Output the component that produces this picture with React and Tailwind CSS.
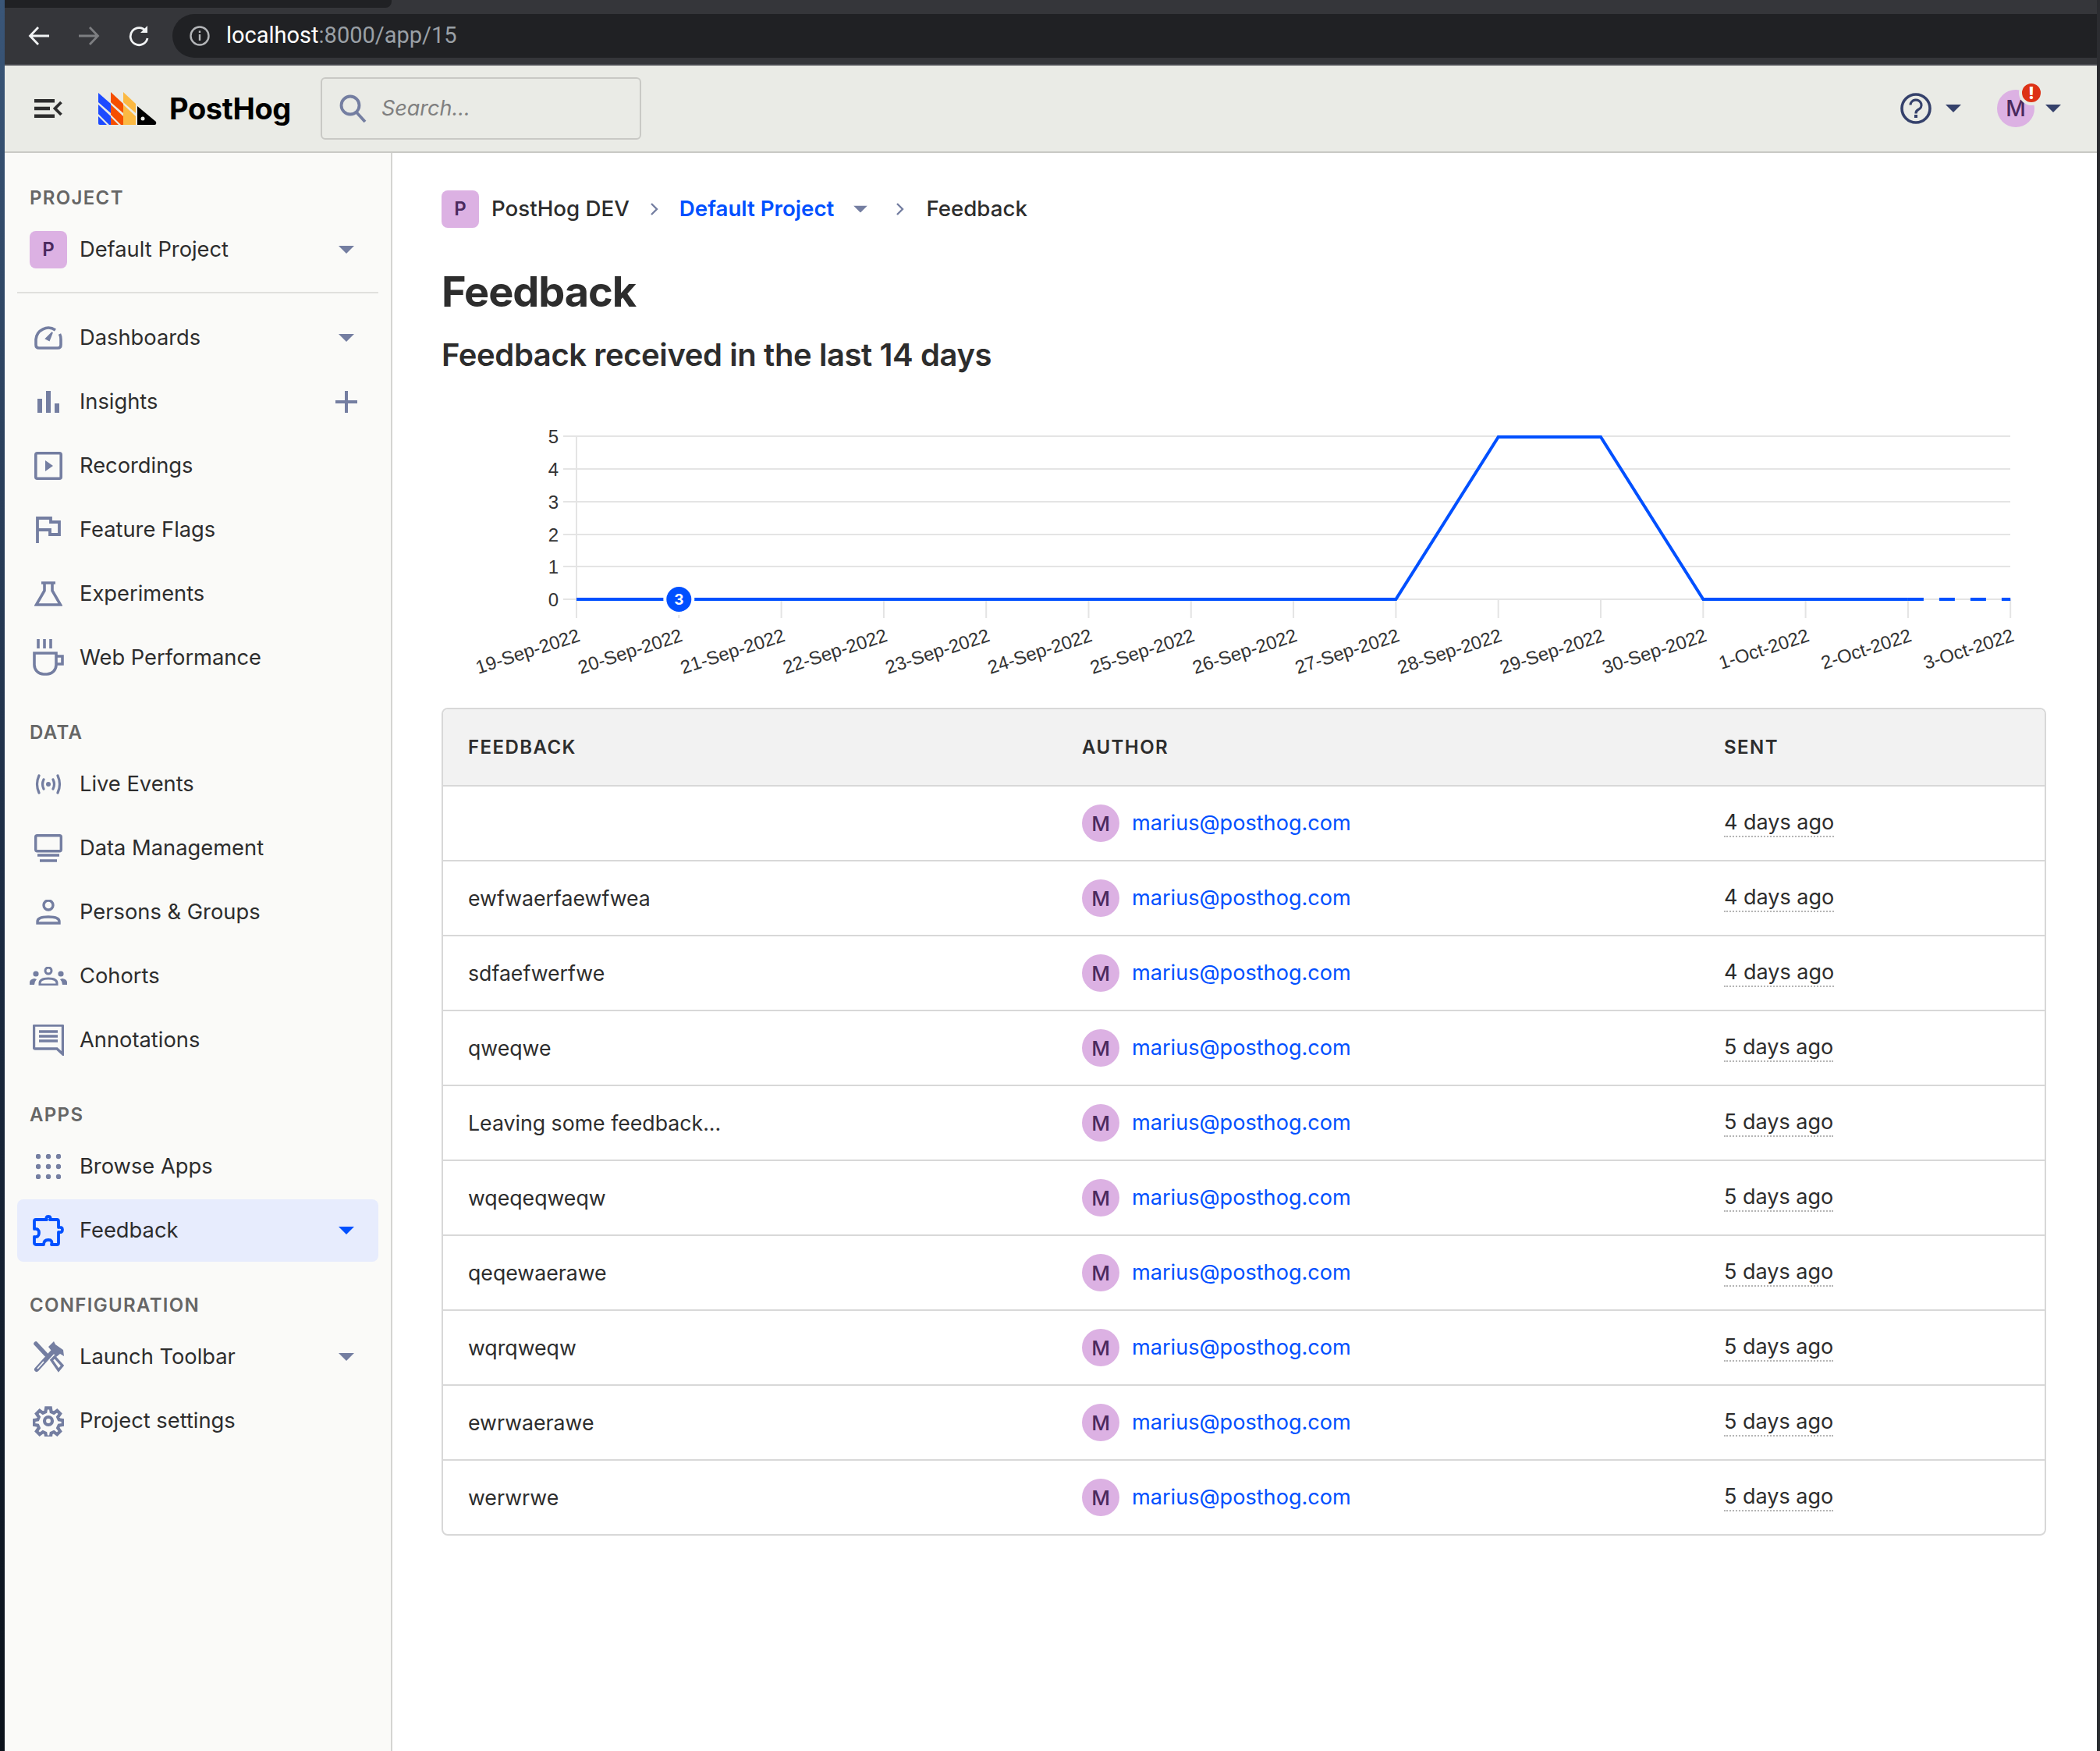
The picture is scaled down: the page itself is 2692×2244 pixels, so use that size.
const slate = "#747ea1";
const blue = "#0050ff";

function Caret({ color = slate, className = "" }) {
  return (
    <svg width="20" height="10" viewBox="0 0 20 10" className={className}>
      <path d="M0 0h20L10 10z" fill={color} />
    </svg>
  );
}

const icons = {
  dashboards: (
    <svg width="36" height="30" viewBox="0 0 36 30" fill="none" stroke={slate} strokeWidth="3.6">
      <path d="M27 5A16 16 0 0 0 2 17v7q0 4 4 4h24q4 0 4-4v-7q0-4-1.5-7" />
      <path d="M15 16l8-8-4 10z" fill={slate} strokeWidth="2" />
    </svg>
  ),
  insights: (
    <svg width="28" height="28" viewBox="0 0 28 28" fill={slate}>
      <rect x="0" y="10" width="6" height="18" />
      <rect x="11" y="0" width="6" height="28" />
      <rect x="22" y="16" width="6" height="12" />
    </svg>
  ),
  recordings: (
    <svg width="36" height="36" viewBox="0 0 36 36" fill="none">
      <rect x="1.8" y="1.8" width="32.4" height="32.4" rx="2" stroke={slate} strokeWidth="3.6" />
      <path d="M14 11l10 7-10 7z" fill={slate} />
    </svg>
  ),
  flags: (
    <svg width="32" height="34" viewBox="0 0 32 34" fill="none" stroke={slate} strokeWidth="3.8">
      <path d="M2 34V2h17v5h11v16H18v-6H2" />
    </svg>
  ),
  experiments: (
    <svg width="36" height="32" viewBox="0 0 36 32" fill="none" stroke={slate} strokeWidth="3.6">
      <path d="M9 2h18M13 2v10L2.500 30h31L23 12V2" />
    </svg>
  ),
  web: (
    <svg width="40" height="48" viewBox="0 0 40 48" fill="none" stroke={slate} strokeWidth="3.6">
      <path d="M7 0v12M15 0v12M23 0v12" />
      <path d="M2 18h28v15a12 12 0 0 1-12 12h-4A12 12 0 0 1 2 33z" />
      <path d="M30 22h8v10h-8" />
    </svg>
  ),
  live: (
    <svg width="38" height="26" viewBox="0 0 38 26" fill="none" stroke={slate} strokeWidth="3.2" strokeLinecap="round">
      <path d="M7 2q-5 11 0 22M31 2q5 11 0 22M13 7q-3 6 0 12M25 7q3 6 0 12" />
      <circle cx="19" cy="13" r="3" fill={slate} stroke="none" />
    </svg>
  ),
  data: (
    <svg width="36" height="36" viewBox="0 0 36 36" fill="none" stroke={slate} strokeWidth="3.4">
      <rect x="1.7" y="1.7" width="32.600" height="20" rx="2" />
      <path d="M4 27h28M7 34h22" />
    </svg>
  ),
  persons: (
    <svg width="32" height="32" viewBox="0 0 32 32" fill="none" stroke={slate} strokeWidth="3.4">
      <circle cx="16" cy="7" r="6" />
      <path d="M2 30v-2q0-6 14-6t14 6v2z" />
    </svg>
  ),
  cohorts: (
    <svg width="48" height="24" viewBox="0 0 48 24" fill="none">
      <circle cx="24" cy="5" r="4" stroke={slate} strokeWidth="3" />
      <circle cx="8" cy="9" r="3.600" fill={slate} />
      <circle cx="40" cy="9" r="3.600" fill={slate} />
      <path d="M13 23v-2q0-6 11-6t11 6v2z" stroke={slate} strokeWidth="3" />
      <path d="M0 23v-3q0-4 6-5l3 1q-3 3-3 7zM48 23v-3q0-4-6-5l-3 1q3 3 3 7z" fill={slate} />
    </svg>
  ),
  annotations: (
    <svg width="40" height="40" viewBox="0 0 40 40" fill="none" stroke={slate}>
      <path d="M38.500 38L31 31H3q-1.500 0-1.500-1.500v-27Q1.500 1 3 1h34q1.500 0 1.500 1.500z" strokeWidth="3.400" />
      <path d="M8 9h24M8 15h24M8 21h24" strokeWidth="3.400" />
    </svg>
  ),
  browse: (
    <svg width="32" height="32" viewBox="0 0 32 32" fill={slate}>
      {[3, 16, 29].map((y) =>
        [3, 16, 29].map((x) => <circle key={`${x}-${y}`} cx={x} cy={y} r="3.200" />)
      )}
    </svg>
  ),
  feedback: (
    <svg width="40" height="40" viewBox="0 0 40 40" fill="none" stroke={blue} strokeWidth="3.800" strokeLinejoin="round">
      <path d="M14 6h4q-2-4 2-4t2 4h9q2 0 2 2v8q5-1 5 3t-5 3v14q0 2-2 2H24q2-6-4-6t-6 6H4q-2 0-2-2v-8q6 1 6-5t-6-5V8q0-2 2-2z" />
    </svg>
  ),
  toolbar: (
    <svg width="40" height="42" viewBox="0 0 40 42" fill="none" stroke={slate}>
      <path d="M4 4l13 14" strokeWidth="5.500" strokeLinecap="round" />
      <path d="M24 25l4-4 10 11-5 6z" strokeWidth="3.400" />
      <path d="M5 37l20-22" stroke={slate} strokeWidth="6" strokeLinecap="round" />
      <path d="M6 36l8-9" stroke="#fafaf8" strokeWidth="1.600" />
      <path d="M20 8l7-7 2 4 10 7 1 8-5-3-5 4z" fill={slate} strokeWidth="0" />
    </svg>
  ),
  settings: (
    <svg width="40" height="40" viewBox="0 0 24 24" fill="none" stroke={slate} strokeWidth="2.500">
      <circle cx="12" cy="12" r="3" />
      <path d="M10.300 2h3.400l.5 3 2 .9 2.500-1.800 2.400 2.400-1.800 2.500.9 2 3 .5v3.400l-3 .5-.9 2 1.800 2.500-2.400 2.400-2.500-1.800-2 .9-.5 3h-3.400l-.5-3-2-.9-2.500 1.800-2.400-2.400 1.800-2.500-.9-2-3-.5v-3.400l3-.5.9-2-1.800-2.500 2.400-2.400 2.500 1.800 2-.9z" />
    </svg>
  ),
};

function NavItem({ icon, label, right, active }) {
  return (
    <div
      className={`mx-4 mb-0.5 flex h-20 items-center rounded-lg pl-2 pr-[31px] ${active ? "bg-[#e7ecfd]" : ""}`}
    >
      <div className="flex w-[64px] shrink-0 justify-center">{icons[icon]}</div>
      <span className="ml-2 flex-1 text-[27.3px] text-[#2d2d2d]">{label}</span>
      {right}
    </div>
  );
}

function SectionLabel({ children, className = "" }) {
  return (
    <div className={`pl-[32px] text-[24px] font-semibold leading-none tracking-[0.055em] text-[#666] ${className}`}>
      {children}
    </div>
  );
}

function ProjectBadge() {
  return (
    <div className="flex h-12 w-12 shrink-0 items-center justify-center rounded-lg bg-[#dcb1e3] text-[24px] font-semibold text-[#4b2a5e]">
      P
    </div>
  );
}

function Sidebar() {
  return (
    <aside className="flex w-[497px] shrink-0 flex-col border-r-2 border-[#d5d5d2] bg-[#fafaf8] pt-[46px]">
      <SectionLabel>PROJECT</SectionLabel>
      <div className="mt-[30px] flex h-12 items-center pl-[32px] pr-[47px]">
        <ProjectBadge />
        <span className="ml-4 flex-1 text-[27.3px] text-[#2d2d2d]">Default Project</span>
        <Caret />
      </div>
      <div className="mx-4 mt-[30px] h-0.5 bg-[#e0e0dd]" />
      <div className="mt-[17px]">
        <NavItem icon="dashboards" label="Dashboards" right={<Caret />} />
        <NavItem
          icon="insights"
          label="Insights"
          right={
            <svg width="28" height="28" viewBox="0 0 28 28" fill={slate} className="-mr-1">
              <rect x="12" width="4" height="28" />
              <rect y="12" width="28" height="4" />
            </svg>
          }
        />
        <NavItem icon="recordings" label="Recordings" />
        <NavItem icon="flags" label="Feature Flags" />
        <NavItem icon="experiments" label="Experiments" />
        <NavItem icon="web" label="Web Performance" />
      </div>
      <SectionLabel className="mt-[42px]">DATA</SectionLabel>
      <div className="mt-[14px]">
        <NavItem icon="live" label="Live Events" />
        <NavItem icon="data" label="Data Management" />
        <NavItem icon="persons" label="Persons & Groups" />
        <NavItem icon="cohorts" label="Cohorts" />
        <NavItem icon="annotations" label="Annotations" />
      </div>
      <SectionLabel className="mt-[42px]">APPS</SectionLabel>
      <div className="mt-[14px]">
        <NavItem icon="browse" label="Browse Apps" />
        <NavItem icon="feedback" label="Feedback" active right={<Caret color={blue} />} />
      </div>
      <SectionLabel className="mt-[42px]">CONFIGURATION</SectionLabel>
      <div className="mt-[14px]">
        <NavItem icon="toolbar" label="Launch Toolbar" right={<Caret />} />
        <NavItem icon="settings" label="Project settings" />
      </div>
    </aside>
  );
}

const dates = [
  "19-Sep-2022", "20-Sep-2022", "21-Sep-2022", "22-Sep-2022", "23-Sep-2022",
  "24-Sep-2022", "25-Sep-2022", "26-Sep-2022", "27-Sep-2022", "28-Sep-2022",
  "29-Sep-2022", "30-Sep-2022", "1-Oct-2022", "2-Oct-2022", "3-Oct-2022",
];

function Chart() {
  const x = (i) => 173 + i * 131.3;
  const ys = [268, 226, 185, 143, 101, 59];
  return (
    <svg width="2057" height="390" viewBox="0 0 2057 390" className="block">
      {ys.map((y, i) => (
        <g key={i}>
          <line x1="156" x2="2011" y1={y} y2={y} stroke="#e4e4e4" strokeWidth="2" />
          <text x="150" y={y + 9} textAnchor="end" fontSize="24" fill="#333" fontFamily="Liberation Sans">
            {i}
          </text>
        </g>
      ))}
      {dates.map((d, i) => (
        <g key={d}>
          <line x1={x(i)} x2={x(i)} y1={i === 0 ? 59 : 268} y2="292" stroke="#e4e4e4" strokeWidth="2" />
          <text
            textAnchor="end"
            fontSize="24"
            fill="#333"
            fontFamily="Liberation Sans"
            transform={`translate(${x(i) + 6} 321) rotate(-18)`}
          >
            {d}
          </text>
        </g>
      ))}
      <polyline
        points={`${x(0)},268 ${x(8)},268 ${x(9)},60 ${x(10)},60 ${x(11)},268 ${x(13)},268`}
        fill="none"
        stroke={blue}
        strokeWidth="4"
      />
      <line x1={x(13)} x2={x(14)} y1="268" y2="268" stroke={blue} strokeWidth="4" strokeDasharray="20 20" />
      <circle cx={x(1)} cy="268" r="18" fill={blue} stroke="#fff" strokeWidth="4" />
      <text x={x(1)} y="275" textAnchor="middle" fontSize="19" fontWeight="700" fill="#fff" fontFamily="Inter">
        3
      </text>
    </svg>
  );
}

const rows = [
  ["", "4 days ago"],
  ["ewfwaerfaewfwea", "4 days ago"],
  ["sdfaefwerfwe", "4 days ago"],
  ["qweqwe", "5 days ago"],
  ["Leaving some feedback...", "5 days ago"],
  ["wqeqeqweqw", "5 days ago"],
  ["qeqewaerawe", "5 days ago"],
  ["wqrqweqw", "5 days ago"],
  ["ewrwaerawe", "5 days ago"],
  ["werwrwe", "5 days ago"],
];

function FeedbackTable() {
  return (
    <div className="w-[2057px] overflow-hidden rounded-lg border-2 border-[#d8d8d8]">
      <div className="grid h-[99px] grid-cols-[787px_823px_1fr] items-center border-b-2 border-[#d8d8d8] bg-[#f2f2f2] pl-8 text-[24px] font-semibold tracking-[0.06em] text-[#2d2d2d]">
        <span>FEEDBACK</span>
        <span>AUTHOR</span>
        <span>SENT</span>
      </div>
      {rows.map(([text, sent], i) => (
        <div
          key={i}
          className="grid h-[96px] grid-cols-[787px_823px_1fr] items-center border-b-2 border-[#d8d8d8] pl-8 text-[27px] text-[#2d2d2d] last:h-[94px] last:border-b-0"
        >
          <span className="text-[26.7px]">{text}</span>
          <div className="flex items-center gap-4">
            <div className="flex h-12 w-12 items-center justify-center rounded-full bg-[#dcb1e3] text-[26px] font-medium text-[#4b2a5e]">
              M
            </div>
            <span className="text-[27.1px] text-[#0050ff]">marius@posthog.com</span>
          </div>
          <span className="w-fit border-b-2 border-dotted border-[#b5b5b5] leading-[34px]">{sent}</span>
        </div>
      ))}
    </div>
  );
}

function Main() {
  return (
    <main className="min-w-0 flex-1 bg-white pl-[63px] pt-[48px]">
      <div className="flex h-12 items-center text-[27.7px] font-medium text-[#2d2d2d]">
        <ProjectBadge />
        <span className="ml-4">PostHog DEV</span>
        <svg width="10" height="16" viewBox="0 0 10 16" fill="none" stroke={slate} strokeWidth="2.4" className="ml-[27px]">
          <path d="M1 1l7 7-7 7" />
        </svg>
        <span className="ml-[27px] font-semibold text-[#0050ff]">Default Project</span>
        <Caret className="ml-[24px] scale-90" />
        <svg width="10" height="16" viewBox="0 0 10 16" fill="none" stroke={slate} strokeWidth="2.4" className="ml-[36px]">
          <path d="M1 1l7 7-7 7" />
        </svg>
        <span className="ml-[28px]">Feedback</span>
      </div>
      <h1 className="mt-[48px] text-[54px] font-bold leading-[68px] tracking-[-0.02em] text-[#2d2d2d]">Feedback</h1>
      <h2 className="mt-[23px] text-[40px] font-semibold leading-[48px] tracking-[-0.01em] text-[#2d2d2d]">
        Feedback received in the last 14 days
      </h2>
      <div className="mt-[21px]">
        <Chart />
      </div>
      <div className="mt-[17px]">
        <FeedbackTable />
      </div>
    </main>
  );
}

function Logo() {
  return (
    <svg width="76" height="42" viewBox="0 0 76 42" className="ml-[46px]">
      <g fill="#1d4aff">
        <path d="M0 1l16 14v12L0 13z" />
        <path d="M0 16l16 15v11h-2L0 28z" />
        <path d="M0 31l11 11H2q-2 0-2-2z" />
      </g>
      <g fill="#f54e00">
        <path d="M16 0l16 15v12L16 13z" />
        <path d="M16 16l16 15v11h-3L16 29z" />
        <path d="M16 32l10 10H16z" />
      </g>
      <g fill="#fbb943">
        <path d="M32 0l16 15v12L32 13z" />
        <path d="M32 16l16 15v11H32z" />
      </g>
      <path d="M50 18l24 20q1 4-2 4H50z" fill="#000" />
      <circle cx="57" cy="34" r="2.500" fill="#eaebe6" />
    </svg>
  );
}

function Header() {
  return (
    <header className="flex h-[112px] shrink-0 items-center border-b-2 border-[#c9c9c5] bg-[#eaebe6] pl-[38px]">
      <svg width="36" height="24" viewBox="0 0 36 24" fill="#2d2d2d">
        <rect width="26" height="4.500" />
        <rect y="9.750" width="20" height="4.500" />
        <rect y="19.500" width="26" height="4.500" />
        <path d="M34.500 4L26.500 12l8 8" fill="none" stroke="#2d2d2d" strokeWidth="3.800" />
      </svg>
      <Logo />
      <span className="ml-[15px] text-[38px] font-bold leading-none tracking-[-0.01em] text-black">PostHog</span>
      <div className="ml-[38px] flex h-[80px] w-[411px] items-center rounded-md border-2 border-[#c9c9c5] pl-[22px]">
        <svg width="36" height="36" viewBox="0 0 36 36" fill="none" stroke={slate} strokeWidth="3.800">
          <circle cx="14" cy="14" r="11.500" />
          <path d="M22 23l11 12" />
        </svg>
        <span className="ml-[18px] text-[27px] italic text-[#808080]">Search...</span>
      </div>
      <div className="flex-1" />
      <svg width="40" height="40" viewBox="0 0 40 40" fill="none">
        <circle cx="20" cy="20" r="18" stroke="#35416b" strokeWidth="3.600" />
        <path d="M13 15.500a7 6.500 0 1 1 10 6q-3 1.500-3 5" stroke="#35416b" strokeWidth="3.200" />
        <rect x="18" y="28" width="4" height="4" fill="#35416b" />
      </svg>
      <Caret color="#35416b" className="ml-[18px]" />
      <div className="relative ml-[46px] flex h-12 w-12 items-center justify-center rounded-full bg-[#dcb1e3] text-[28px] font-medium text-[#4b2a5e]">
        M
        <div className="absolute -right-[12px] -top-[12px] flex h-8 w-8 items-center justify-center rounded-full border-4 border-[#eaebe6] bg-[#dd3216] text-[22px] font-extrabold leading-none text-white">
          !
        </div>
      </div>
      <Caret color="#35416b" className="ml-[14px] mr-[46px]" />
    </header>
  );
}

function BrowserBar() {
  return (
    <div className="flex h-[84px] shrink-0 flex-col border-b-2 border-[#4a4b50] bg-[#35363a]">
      <div className="h-[10px] w-[496px] shrink-0 rounded-br-lg bg-[#202124]" />
      <div className="mt-2 flex h-[56px] items-center">
        <svg width="28" height="26" viewBox="0 0 28 26" fill="none" stroke="#f1f3f4" strokeWidth="2.800" className="ml-[30px]">
          <path d="M27 13H3M13 2L2.500 13 13 24" />
        </svg>
        <svg width="28" height="26" viewBox="0 0 28 26" fill="none" stroke="#7d7e81" strokeWidth="2.800" className="ml-[36px]">
          <path d="M1 13h24M15 2l10.500 11L15 24" />
        </svg>
        <svg width="28" height="28" viewBox="0 0 28 28" fill="none" stroke="#f1f3f4" strokeWidth="2.800" className="ml-[36px]">
          <path d="M23 8a11 11 0 1 0 2 9" />
          <path d="M25 1v9h-9" fill="#f1f3f4" strokeWidth="0" />
        </svg>
        <div className="ml-[29px] flex h-[56px] flex-1 items-center rounded-l-[28px] bg-[#202124] pl-[22px]">
          <svg width="26" height="26" viewBox="0 0 26 26" fill="none" stroke="#b3b5b8" strokeWidth="2.400">
            <circle cx="13" cy="13" r="11.500" />
            <path d="M13 11v8M13 6.500v2.500" />
          </svg>
          <span className="ml-[21px] font-['Roboto',sans-serif] text-[29px] text-white">
            localhost<span className="text-[#9aa0a6]">:8000/app/15</span>
          </span>
        </div>
      </div>
    </div>
  );
}

export default function App() {
  return (
    <div className="flex h-screen w-full overflow-hidden bg-[#1c1d20] font-['Inter',sans-serif]">
      {/* wallpaper peeking past the window edge */}
      <div className="w-[6px] shrink-0 bg-gradient-to-b from-[#3a5678] via-[#1c2c44] to-[#0b121b]" />
      <div className="flex min-w-0 flex-1 flex-col">
        <BrowserBar />
        <Header />
        <div className="flex min-h-0 flex-1">
          <Sidebar />
          <Main />
        </div>
      </div>
      <div className="w-[4px] shrink-0 bg-[#2b2c30]" />
    </div>
  );
}
